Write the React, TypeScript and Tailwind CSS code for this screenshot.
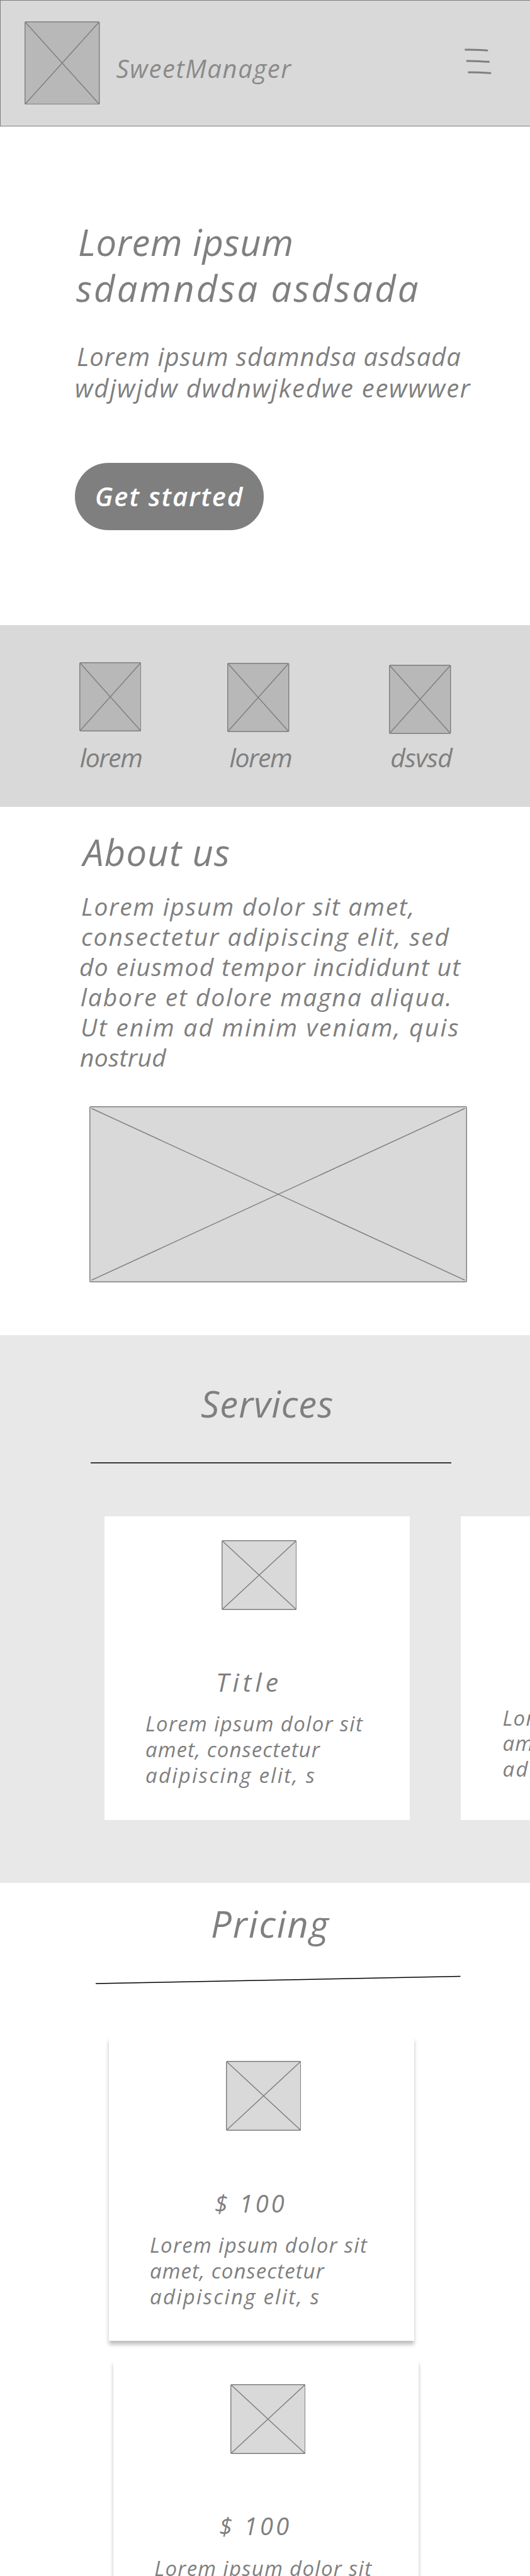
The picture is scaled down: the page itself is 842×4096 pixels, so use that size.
type Line = { text: string; className: string };

function Placeholder({
  width,
  height,
  fill = "#d9d9d9",
  inset = 1,
  className = "",
}: {
  width: number;
  height: number;
  fill?: string;
  inset?: number;
  className?: string;
}) {
  return (
    <svg
      width={width}
      height={height}
      viewBox={`0 0 ${width} ${height}`}
      className={`block shrink-0 ${className}`}
      aria-hidden="true"
    >
      <rect
        x="0.75"
        y="0.75"
        width={width - 1.5}
        height={height - 1.5}
        rx="1.5"
        fill={fill}
        stroke="#7f7f7f"
        strokeWidth="1.45"
      />
      <path
        d={`M${inset} ${inset}L${width - inset} ${height - inset}M${width - inset} ${inset}L${inset} ${height - inset}`}
        stroke="#7f7f7f"
        strokeWidth="1.45"
      />
    </svg>
  );
}

function Lines({ lines }: { lines: Line[] }) {
  return (
    <>
      {lines.map((line) => (
        <span key={line.text} className={`block whitespace-nowrap ${line.className}`}>
          {line.text}
        </span>
      ))}
    </>
  );
}

const heroTitle: Line[] = [
  { text: "Lorem ipsum", className: "pl-0.5 tracking-[0.7px]" },
  { text: "sdamndsa asdsada", className: "-ml-px tracking-[3.1px]" },
];

const heroText: Line[] = [
  { text: "Lorem ipsum sdamndsa asdsada", className: "tracking-[0.95px]" },
  { text: "wdjwjdw dwdnwjkedwe eewwwer", className: "-ml-[3px] tracking-[1.75px]" },
];

const aboutText: Line[] = [
  { text: "Lorem ipsum dolor sit amet,", className: "tracking-[1.7px]" },
  { text: "consectetur adipiscing elit, sed", className: "tracking-[1.95px]" },
  { text: "do eiusmod tempor incididunt ut", className: "-ml-[3px] tracking-[1.3px]" },
  { text: "labore et dolore magna aliqua.", className: "-ml-px tracking-[1.9px]" },
  { text: "Ut enim ad minim veniam, quis", className: "-ml-px tracking-[2.25px]" },
  { text: "nostrud", className: "-ml-0.5 tracking-[0.4px]" },
];

const cardText: Line[] = [
  { text: "Lorem ipsum dolor sit", className: "tracking-[1.3px]" },
  { text: "amet, consectetur", className: "tracking-[1.05px]" },
  { text: "adipiscing elit, s", className: "tracking-[2.25px]" },
];

function Card({ title, price = false, className = "" }: { title: string; price?: boolean; className?: string }) {
  return (
    <article className={`flex h-[483px] w-[484.5px] shrink-0 flex-col bg-white pt-[38px] ${className}`}>
      <Placeholder width={119.5} height={111} className="ml-[185.7px]" />
      <h3
        className={
          price
            ? "mt-[91.5px] ml-[168px] text-[38px] leading-[46px] tracking-[4.3px]"
            : "mt-[90.5px] ml-[177px] text-[41px] leading-[46px] tracking-[6px]"
        }
      >
        {title}
      </h3>
      <p className="mt-[24.5px] ml-[65px] text-[33px] leading-[40.9px]">
        <Lines lines={cardText} />
      </p>
    </article>
  );
}

export default function App() {
  return (
    <div className="h-[4096px] w-[842px] overflow-hidden bg-white font-['Open_Sans',sans-serif] text-[#7f7f7f] italic">
      <header className="flex h-[201px] items-start border-y border-l border-[#7f7f7f] bg-[#d9d9d9] pl-[38px]">
        <Placeholder width={119.5} height={132.5} fill="#b8b8b8" className="mt-[32.5px]" />
        <span className="mt-[84px] ml-[26px] w-[300px] text-[40px] leading-[48px] tracking-[1.6px] text-[#8a8a8a]">
          SweetManager
        </span>
        <button type="button" aria-label="Menu" className="mt-[74px] ml-[252px]">
          <svg width="46" height="46" viewBox="0 0 46 46" fill="none" stroke="#7f7f7f" strokeWidth="3" strokeLinecap="round">
            <path d="M2.5 4Q16 3.6 37 5.2M5 22Q18 21.7 39.5 23.3M7.7 40Q21 39.7 42 41.2" />
          </svg>
        </button>
      </header>

      <section className="h-[793px] pt-[147px] pl-[122px]">
        <h1 className="text-[58px] leading-[73px]">
          <Lines lines={heroTitle} />
        </h1>
        <p className="mt-[48px] text-[40px] leading-[50px]">
          <Lines lines={heroText} />
        </p>
        <button
          type="button"
          className="mt-[94px] -ml-[3px] flex h-[107px] w-[300px] items-center justify-center rounded-[53px] bg-[#7f7f7f] pb-[2px] text-[42px] font-semibold tracking-[1.9px] text-white"
        >
          Get started
        </button>
      </section>

      <section className="flex h-[289px] items-start bg-[#d9d9d9] pt-[58.5px] pl-[125.7px] text-[41px] leading-[50px]">
        <div className="w-[235.8px]">
          <Placeholder width={98.5} height={110} fill="#b8b8b8" />
          <p className="mt-[16px] ml-px tracking-[-1.4px]">lorem</p>
        </div>
        <div className="w-[256.7px] pt-px">
          <Placeholder width={98.5} height={110} fill="#b8b8b8" />
          <p className="mt-[15px] ml-[3px] tracking-[-1.4px]">lorem</p>
        </div>
        <div className="pt-[4.5px]">
          <Placeholder width={98.5} height={110} fill="#b8b8b8" />
          <p className="mt-[11.5px] ml-[2px] tracking-[-0.7px]">dsvsd</p>
        </div>
      </section>

      <section className="h-[840px] pt-[35.5px] pl-[129px]">
        <h2 className="ml-[3px] text-[58px] leading-[72px] tracking-[1.2px]">About us</h2>
        <p className="mt-[26px] text-[39px] leading-[48px]">
          <Lines lines={aboutText} />
        </p>
        <Placeholder width={600} height={280} inset={3.5} className="mt-[54.5px] ml-[12.5px]" />
      </section>

      <section className="h-[871px] overflow-hidden bg-[#e8e8e8] pt-[73px]">
        <h2 className="ml-[319px] text-[58px] leading-[72px] tracking-[1.1px]">Services</h2>
        <svg width="842" height="2" className="mt-[57px] block" aria-hidden="true">
          <path d="M144 1H717" stroke="#000" strokeWidth="1.5" />
        </svg>
        <div className="mt-[84px] flex gap-[81px] pl-[166px]">
          <Card title="Title" />
          <article className="flex h-[483px] w-[484.5px] shrink-0 flex-col bg-white pt-[300.5px] pl-[67px] text-[33px] leading-[40.9px]">
            <Lines lines={cardText} />
          </article>
        </div>
      </section>

      <section className="pt-[29px]">
        <h2 className="ml-[335px] text-[58px] leading-[72px] tracking-[2px]">Pricing</h2>
        <svg width="842" height="15" className="mt-[45.5px] block" aria-hidden="true">
          <path d="M152 13L731.5 1.5" stroke="#000" strokeWidth="1.5" />
        </svg>
        <div className="mt-[83.5px] flex flex-col gap-[30.5px] pl-[173px]">
          <Card title="$ 100" price className="shadow-[0_6px_6px_rgba(0,0,0,0.25)]" />
          <Card title="$ 100" price className="ml-[7.3px] shadow-[0_6px_6px_rgba(0,0,0,0.25)]" />
        </div>
      </section>
    </div>
  );
}
